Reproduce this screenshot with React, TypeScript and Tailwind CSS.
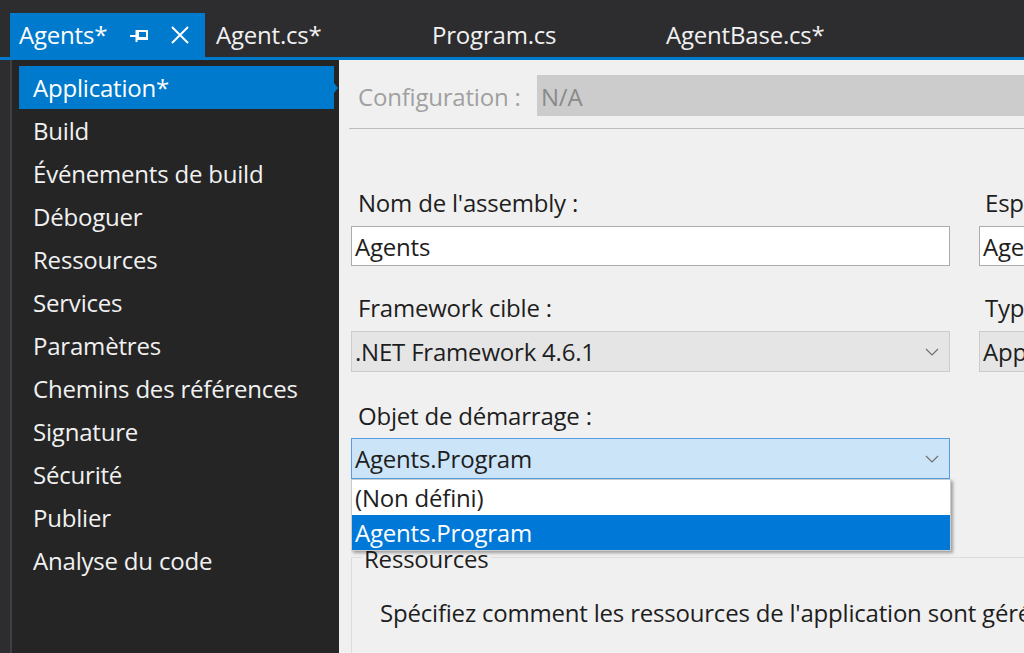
import React from "react";

const font = { fontFamily: '"Open Sans", "Noto Sans", sans-serif' };

const navItems = [
  "Application*",
  "Build",
  "Événements de build",
  "Déboguer",
  "Ressources",
  "Services",
  "Paramètres",
  "Chemins des références",
  "Signature",
  "Sécurité",
  "Publier",
  "Analyse du code",
];

function Chevron() {
  return (
    <svg width="14" height="8" viewBox="0 0 14 8" className="shrink-0">
      <path d="M1 1 L7 7 L13 1" fill="none" stroke="#707070" strokeWidth="1.2" />
    </svg>
  );
}

function PinIcon() {
  return (
    <svg width="20" height="14" viewBox="0 0 20 14">
      <path d="M1 7 H7" stroke="white" strokeWidth="2" />
      <path d="M7.5 1 V13" stroke="white" strokeWidth="2" />
      <rect x="9" y="2" width="9" height="8" fill="none" stroke="white" strokeWidth="2" />
      <path d="M9 9 H18" stroke="white" strokeWidth="2" />
    </svg>
  );
}

function CloseIcon() {
  return (
    <svg width="20" height="20" viewBox="0 0 20 20">
      <path d="M2 2 L18 18 M18 2 L2 18" stroke="white" strokeWidth="2" />
    </svg>
  );
}

export default function App() {
  return (
    <div
      className="flex h-[653px] w-[1024px] flex-col overflow-hidden bg-[#2d2d30] text-[24px] tracking-[-0.2px]"
      style={font}
    >
      {/* tab strip */}
      <div className="flex h-[57px] shrink-0 items-end">
        <div className="ml-[10px] flex h-[44px] w-[195px] items-center bg-[#007acc] pl-[9px] text-white">
          <span className="leading-none">Agents*</span>
          <span className="ml-[22px] mt-[2px]">
            <PinIcon />
          </span>
          <span className="ml-[21px]">
            <CloseIcon />
          </span>
        </div>
        <div className="flex h-[44px] w-[216px] items-center pl-[11px] text-[#f1f1f1]">Agent.cs*</div>
        <div className="flex h-[44px] w-[234px] items-center pl-[11px] text-[#f1f1f1]">Program.cs</div>
        <div className="flex h-[44px] items-center pl-[11px] text-[#f1f1f1]">AgentBase.cs*</div>
      </div>
      <div className="h-[3px] shrink-0 bg-[#007acc]" />

      <div className="flex min-h-0 flex-1">
        {/* sidebar */}
        <div className="flex w-[339px] shrink-0">
          <div className="w-[10px] bg-[#2d2d30]" />
          <div className="w-[2px] bg-[#3f3f46]" />
          <div className="flex-1 bg-[#252526] pl-[7px] pr-[5px] pt-[6px]">
            {navItems.map((item, i) => (
              <div
                key={item}
                className={
                  i === 0
                    ? "relative flex h-[43px] items-center bg-[#007acc] pl-[14px] text-white"
                    : "flex h-[43px] items-center pl-[14px] text-[#f1f1f1]"
                }
              >
                {item}
                {i === 0 && (
                  <span className="absolute right-[-4px] top-[17px] h-0 w-0 border-y-[5px] border-l-[4px] border-y-transparent border-l-[#007acc]" />
                )}
              </div>
            ))}
          </div>
        </div>

        {/* property page */}
        <div className="relative flex-1 bg-[#f0f0f0] text-[#1e1e1e]">
          <div className="mt-[15px] flex h-[41px] items-center">
            <span className="ml-[19px] w-[179px] pt-[3px] text-[#a0a0a0]">Configuration :</span>
            <div className="flex h-full flex-1 items-center bg-[#cccccc] pl-[4px] pt-[3px] text-[#8a8a8a]">N/A</div>
          </div>
          <div className="ml-[10px] mt-[12px] h-px bg-[#bcbcbc]" />

          <div className="ml-[12px] mt-[60px] grid grid-cols-[599px_599px] gap-x-[29px]">
            <div>
              <div className="h-[28px] pl-[7px] leading-[28px]">Nom de l'assembly :</div>
              <div className="mt-[9px] flex h-[40px] items-center border border-[#acacac] bg-white pl-[3px] pt-[2px]">Agents</div>
            </div>
            <div>
              <div className="h-[28px] pl-[6px] leading-[28px]">Espace de noms par défaut :</div>
              <div className="mt-[9px] flex h-[40px] items-center border border-[#acacac] bg-white pl-[3px] pt-[2px]">Agents</div>
            </div>

            <div className="mt-[28px]">
              <div className="h-[28px] pl-[7px] leading-[28px]">Framework cible :</div>
              <div className="mt-[9px] flex h-[41px] items-center justify-between border border-[#cccccc] bg-[#e5e5e5] pl-[3px] pr-[10px]">
                <span>.NET Framework 4.6.1</span>
                <Chevron />
              </div>
            </div>
            <div className="mt-[28px]">
              <div className="h-[28px] pl-[6px] leading-[28px]">Type de sortie :</div>
              <div className="mt-[9px] flex h-[41px] items-center justify-between border border-[#cccccc] bg-[#e5e5e5] pl-[3px] pr-[10px]">
                <span>Application console</span>
                <Chevron />
              </div>
            </div>

            <div className="relative col-span-2 mt-[30px] w-[599px]">
              <div className="h-[28px] pl-[7px] leading-[28px]">Objet de démarrage :</div>
              <div className="mt-[8px] flex h-[41px] items-center justify-between border border-[#569de5] bg-[#cce4f7] pl-[3px] pr-[10px]">
                <span>Agents.Program</span>
                <Chevron />
              </div>
              {/* open dropdown list */}
              <div className="absolute left-0 top-[77px] z-10 w-[600px] border border-[#cccccc] bg-white shadow-[2px_2px_3px_rgba(0,0,0,0.35)]">
                <div className="flex h-[35px] items-center pl-[3px]">(Non défini)</div>
                <div className="flex h-[35px] items-center bg-[#0078d7] pl-[3px] text-white">Agents.Program</div>
              </div>
            </div>
          </div>

          {/* Ressources group */}
          <div className="relative ml-[12px] mt-[78px] h-[200px] border-l border-t border-[#dcdcdc]">
            <span className="absolute left-[10px] top-[-13px] bg-[#f0f0f0] px-[2px] leading-[28px]">Ressources</span>
            <div className="pl-[28px] pt-[37px]">
              Spécifiez comment les ressources de l'application sont gérées :
            </div>
          </div>
        </div>
      </div>
    </div>
  );
}
